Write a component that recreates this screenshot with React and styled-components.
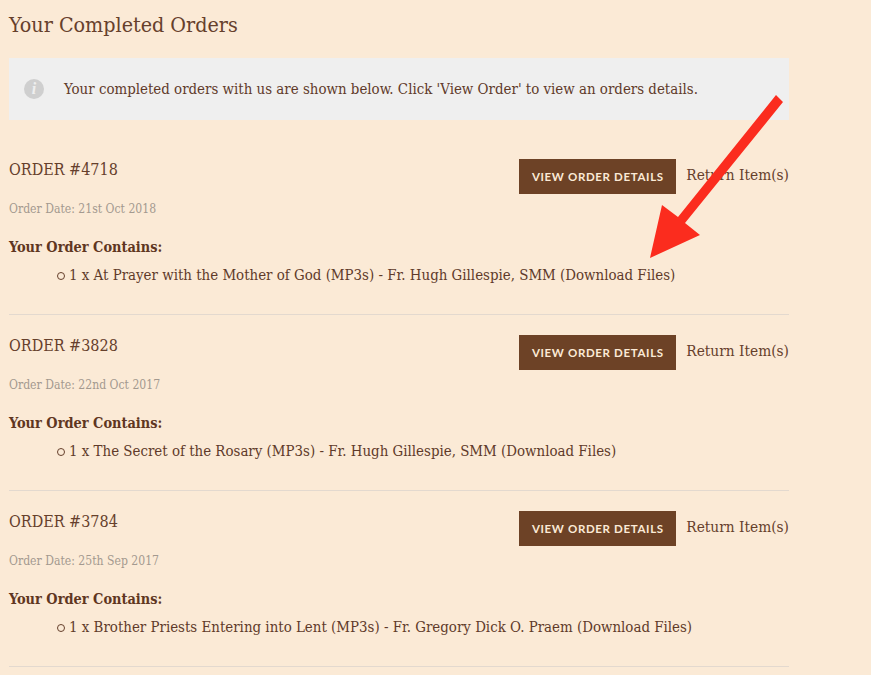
import React from "react";
import styled, { createGlobalStyle } from "styled-components";

const Global = createGlobalStyle`
  html, body { margin: 0; padding: 0; background: #fbead6; height: 675px; overflow: hidden; }
  * { box-sizing: border-box; }
`;
const serif = `"DejaVu Serif Condensed", "DejaVu Serif", "Liberation Serif", serif`;

const Page = styled.div`
  position: relative;
  width: 871px;
  height: 675px;
  overflow: hidden;
  padding: 0 82px 0 9px;
  font-family: ${serif};
  color: #66402c;
`;
const Title = styled.h1`
  margin: 0;
  height: 58px;
  padding-top: 11px;
  font-size: 21.3px;
  line-height: 28px;
  font-weight: 400;
  color: #66402c;
`;
const Notice = styled.div`
  display: flex;
  align-items: center;
  height: 62px;
  padding-left: 15px;
  gap: 20px;
  background: #efefef;
  font-size: 14.9px;
  color: #5f3a2a;
`;
const InfoIcon = styled.span`
  flex: none;
  width: 20px;
  height: 20px;
  border-radius: 50%;
  background: #cfcfcf;
  color: #efefef;
  display: flex;
  align-items: center;
  justify-content: center;
  font-family: "Liberation Serif", serif;
  font-style: italic;
  font-size: 16px;
  font-weight: 700;
`;
const OrderList = styled.div`
  padding-top: 19px;
`;
const Order = styled.section`
  height: 176px;
  padding-top: 21px;
  border-bottom: 1px solid #e3d9cf;
`;
const OrderHead = styled.div`
  display: flex;
  align-items: flex-start;
  justify-content: space-between;
  height: 41px;
`;
const OrderNumber = styled.h2`
  margin: 0;
  font-size: 16px;
  line-height: 20px;
  font-weight: 400;
  color: #66402c;
`;
const Actions = styled.div`
  display: flex;
  align-items: flex-start;
  gap: 10px;
`;
const DetailsButton = styled.button`
  width: 157px;
  height: 35px;
  margin-top: -1px;
  padding: 0;
  border: 0;
  background: #6d4226;
  color: #fbead6;
  font-family: Lato, "Open Sans", sans-serif;
  font-size: 11.5px;
  font-weight: 700;
  letter-spacing: 0.65px;
  text-transform: uppercase;
`;
const ReturnLink = styled.a`
  font-size: 15.3px;
  line-height: 30px;
  color: #66402c;
`;
const OrderDate = styled.div`
  font-size: 12.1px;
  line-height: 16px;
  color: #a3998f;
`;
const ContainsLabel = styled.div`
  margin-top: 20px;
  font-size: 14.4px;
  line-height: 20px;
  font-weight: 700;
  color: #5f3621;
`;
const Items = styled.ul`
  margin: 8px 0 0;
  padding: 0 0 0 48px;
  list-style: none;
  font-size: 14.9px;
  line-height: 20px;
  color: #5f3a2a;
`;
const Item = styled.li`
  display: flex;
  align-items: center;
  gap: 4px;
  &::before {
    content: "";
    flex: none;
    width: 6px;
    height: 6px;
    margin-top: 2px;
    border: 1px solid #66402c;
    border-radius: 50%;
  }
`;
const Arrow = styled.svg`
  position: absolute;
  left: 0;
  top: 0;
  pointer-events: none;
`;

const orders = [
  { id: 4718, date: "21st Oct 2018", item: "1 x At Prayer with the Mother of God (MP3s) - Fr. Hugh Gillespie, SMM (Download Files)" },
  { id: 3828, date: "22nd Oct 2017", item: "1 x The Secret of the Rosary (MP3s) - Fr. Hugh Gillespie, SMM (Download Files)" },
  { id: 3784, date: "25th Sep 2017", item: "1 x Brother Priests Entering into Lent (MP3s) - Fr. Gregory Dick O. Praem (Download Files)" },
];

export default function App() {
  return (
    <Page>
      <Global />
      <Title>Your Completed Orders</Title>
      <Notice>
        <InfoIcon>i</InfoIcon>
        Your completed orders with us are shown below. Click 'View Order' to view an orders details.
      </Notice>
      <OrderList>
        {orders.map((o) => (
          <Order key={o.id}>
            <OrderHead>
              <OrderNumber>ORDER #{o.id}</OrderNumber>
              <Actions>
                <DetailsButton>View Order Details</DetailsButton>
                <ReturnLink>Return Item(s)</ReturnLink>
              </Actions>
            </OrderHead>
            <OrderDate>Order Date: {o.date}</OrderDate>
            <ContainsLabel>Your Order Contains:</ContainsLabel>
            <Items><Item>{o.item}</Item></Items>
          </Order>
        ))}
      </OrderList>
      <Arrow width="871" height="675" viewBox="0 0 871 675">
        <polygon fill="#fb2c1e" points="776,95 783,102 685,223 700,235 650,258 662,205 678,217" />
      </Arrow>
    </Page>
  );
}
